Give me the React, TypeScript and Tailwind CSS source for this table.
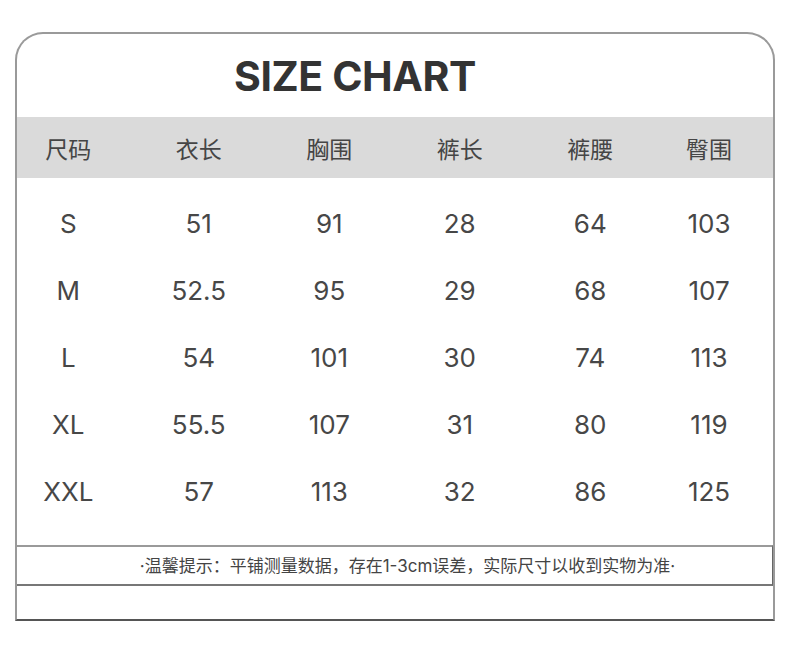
const headers = ['尺码', '衣长', '胸围', '裤长', '裤腰', '臀围'];

const rows = [
  ['S', '51', '91', '28', '64', '103'],
  ['M', '52.5', '95', '29', '68', '107'],
  ['L', '54', '101', '30', '74', '113'],
  ['XL', '55.5', '107', '31', '80', '119'],
  ['XXL', '57', '113', '32', '86', '125'],
];

const cjk = { fontFamily: 'Inter, "Noto Sans CJK SC", sans-serif' };

export default function App() {
  return (
    <div className="min-h-screen bg-white pt-[32px] pl-[15px]" style={cjk}>
      {/* Card */}
      <div className="w-[760px] border-2 border-[#9a9a9a] border-b-[#555] rounded-t-[28px] bg-white overflow-hidden">
        {/* Title */}
        <div className="h-[83px] flex items-center justify-center pr-[80px] pt-[2px]">
          <h1 className="text-[41px] font-bold text-[#333] tracking-[-0.4px] leading-none">SIZE CHART</h1>
        </div>

        {/* Header band */}
        <div className="h-[61px] bg-[#dadada]">
          <div className="-ml-[14px] grid grid-cols-[repeat(5,130.5px)_107px] h-full items-center pt-[6px]">
            {headers.map((h) => (
              <div key={h} className="text-center text-[23px] text-[#454545] leading-none">
                {h}
              </div>
            ))}
          </div>
        </div>

        {/* Rows */}
        <div className="pt-[12px] pb-[20px]">
          {rows.map((r) => (
            <div key={r[0]} className="-ml-[14px] grid grid-cols-[repeat(5,130.5px)_107px] h-[67px] items-center">
              {r.map((v, i) => (
                <div key={i} className="text-center text-[26px] text-[#474747] leading-none">
                  {v}
                </div>
              ))}
            </div>
          ))}
        </div>

        {/* Note */}
        <div className="h-[41px] border-t-2 border-b-2 border-t-[#9a9a9a] border-b-[#777] border-r border-r-[#666] flex items-center justify-center pl-[26px] pt-[1px]">
          <p className="text-[17px] text-[#444] leading-none">·温馨提示：平铺测量数据，存在1-3cm误差，实际尺寸以收到实物为准·</p>
        </div>

        <div className="h-[33px]" />
      </div>
    </div>
  );
}
